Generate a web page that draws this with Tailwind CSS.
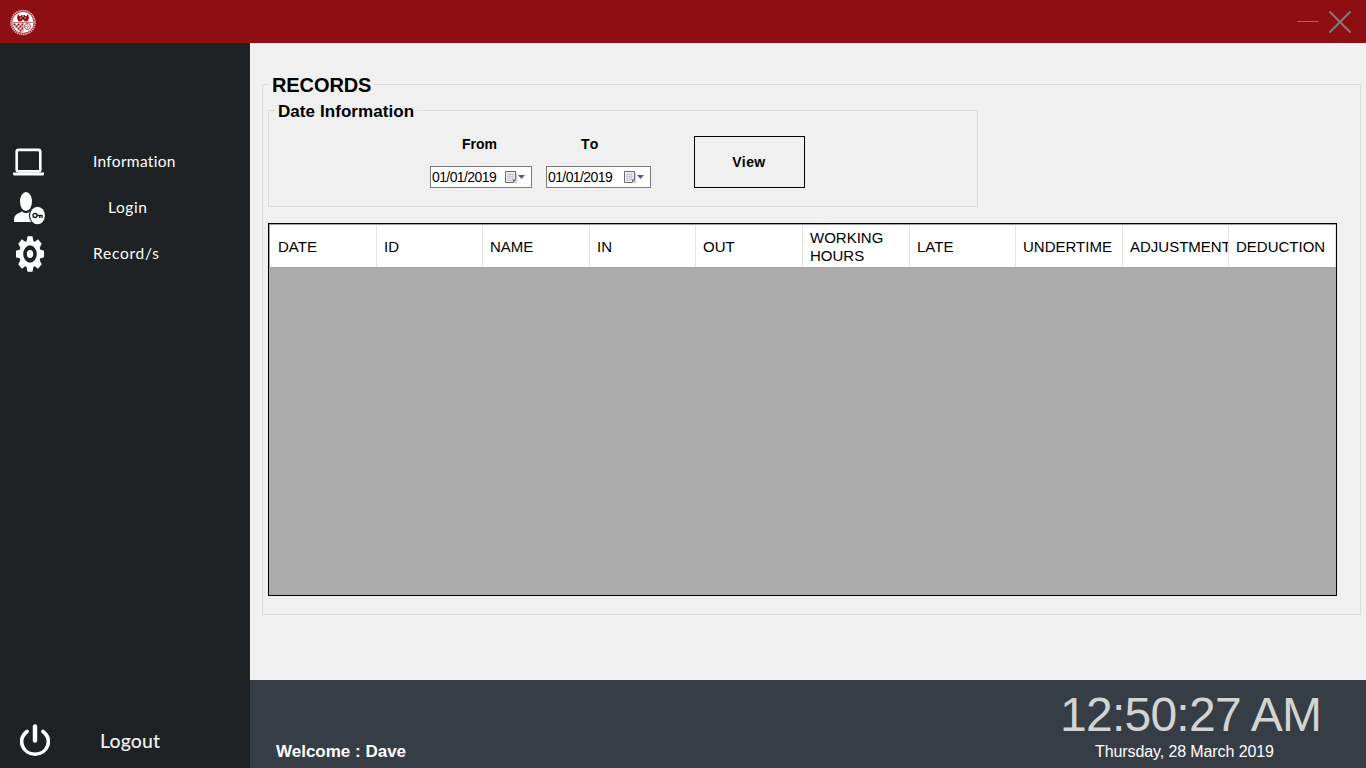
<!DOCTYPE html>
<html lang="en">
<head>
<meta charset="utf-8">
<title>Records</title>
<script src="https://cdn.jsdelivr.net/npm/@tailwindcss/browser@4"></script>
</head>
<body class="w-[1366px] h-[768px] overflow-hidden flex flex-col bg-[#f0f0f0] text-black font-['Liberation_Sans',Arial,sans-serif]">
<header class="h-[43px] shrink-0 bg-[#8e0e12] flex items-start justify-between pl-[9px] pr-[14px]">
  <svg class="mt-[8px]" width="28" height="28" viewBox="0 0 28 28">
    <circle cx="14" cy="14.500" r="11.800" fill="#8e0e12" stroke="#d9a5a7" stroke-width="2" stroke-dasharray="1.500 .6"/>
    <circle cx="14" cy="14.500" r="10.600" fill="#fff"/>
    <path d="M4 14.500h20M14 14.500v10" stroke="#b25a5d" stroke-width=".8"/>
    <path d="M9 6l2 2.500L12.500 7h3L17 8.500 19 6l1 4-1.500 3.500h-2.500l-2-2-2 2H9.500L8 10z" fill="#8e0e12"/>
    <path d="M11 10h1.500M15.500 10H17M13 8h2" stroke="#fff" stroke-width=".8"/>
    <path d="M4.500 15.500h2v2h-2zM8.500 15.500h2v2h-2zM6.500 17.500h2v2h-2zM10.500 17.500h2v2h-2zM8.500 19.500h2v2h-2zM12.500 15.500H14v2h-1.500zM12.500 19.500H14v2h-1.500zM10.500 21.500h2v2h-2z" fill="#8e0e12"/>
    <circle cx="18.500" cy="18.500" r="3" fill="none" stroke="#a64b4e" stroke-width="1"/>
    <path d="M15.500 18.500h6M18.500 15.500v6" stroke="#c07f81" stroke-width=".7"/>
  </svg>
  <svg class="mt-[8px]" width="56" height="28" viewBox="0 0 56 28">
    <path d="M1 13.500h21.500" stroke="#86747a" stroke-width="1"/>
    <path d="M33.500 3.500l21 21M54.500 3.500l-21 21" stroke="#84797b" stroke-width="2"/>
  </svg>
</header>
<div class="flex flex-1 min-h-0">
  <aside class="w-[250px] shrink-0 bg-[#1e2225] text-white flex flex-col justify-between pt-[96px] font-[Lato,sans-serif]">
    <nav class="flex flex-col">
      <a class="h-[46px] flex items-center">
        <svg class="ml-[13px] w-[32px] h-[30px] shrink-0" viewBox="0 0 32 30"><rect x="3.700" y="2.900" width="23.600" height="21.500" rx="2" fill="none" stroke="#fff" stroke-width="2.600"/><path d="M0 25.500h31v1.500q0 1.500-1.500 1.500h-28Q0 28.500 0 27z" fill="#fff"/></svg>
        <span class="ml-[48px] -mt-[2px] text-[15.5px] leading-[20px] tracking-[0.3px]">Information</span>
      </a>
      <a class="h-[46px] flex items-center">
        <svg class="ml-[13px] w-[33px] h-[34px] shrink-0" viewBox="0 0 33 34"><ellipse cx="13" cy="10.500" rx="6" ry="9.500" fill="#fff"/><path d="M1 31v-2q0-5 4-6.500l4-2q4 3.500 8 0l5 2.500v8z" fill="#fff"/><ellipse cx="24.500" cy="24.500" rx="8.600" ry="9.700" fill="#1e2225"/><ellipse cx="24.500" cy="24.500" rx="7.400" ry="8.700" fill="#fff"/><circle cx="22" cy="24.500" r="2" fill="none" stroke="#1e2225" stroke-width="1.400"/><path d="M24 24.500h5v2.500M26.800 24.500v2.500" fill="none" stroke="#1e2225" stroke-width="1.300"/></svg>
        <span class="ml-[62px] -mt-[2px] text-[15.5px] leading-[20px] tracking-[0.6px]">Login</span>
      </a>
      <a class="h-[46px] flex items-center">
        <svg class="ml-[15px] w-[30px] h-[36px] shrink-0" viewBox="0 0 30 36"><g transform="translate(15 18) scale(1 1.270)"><g fill="#fff"><circle r="10.700"/><path id="tooth" d="M-2.500-14h5l1.200 5h-7.400z"/><use href="#tooth" transform="rotate(45)"/><use href="#tooth" transform="rotate(90)"/><use href="#tooth" transform="rotate(135)"/><use href="#tooth" transform="rotate(180)"/><use href="#tooth" transform="rotate(225)"/><use href="#tooth" transform="rotate(270)"/><use href="#tooth" transform="rotate(315)"/></g><circle r="6.800" fill="#1e2225"/><circle r="3.200" fill="#fff"/></g></svg>
        <span class="ml-[48px] -mt-[2px] text-[15.5px] leading-[20px] tracking-[0.75px]">Record/s</span>
      </a>
    </nav>
    <a class="h-[54px] flex items-center">
      <svg class="ml-[20px] -mt-[2px] w-[30px] h-[34px] shrink-0" viewBox="0 0 30 34"><path d="M7 8.500C-3.500 17 3 31.200 15 31.200S33.500 17 23 8.500" fill="none" stroke="#fff" stroke-width="3.600" stroke-linecap="round"/><path d="M15 3.500v14" stroke="#fff" stroke-width="4.400" stroke-linecap="round"/></svg>
      <span class="ml-[50px] text-[19.5px] leading-[24px] text-[#f0f0f0] tracking-[0.1px] font-medium">Logout</span>
    </a>
  </aside>
  <div class="flex-1 min-w-0 flex flex-col">
    <main class="flex-1 pt-[41px] pl-[12px] pr-[5px]">
      <section class="relative h-[531px] border border-[#dcdcdc] pl-[5px] pt-[25px]">
        <h1 class="absolute left-[6px] top-[-12px] bg-[#f0f0f0] px-[3px] text-[20px] leading-[24px] font-bold tracking-[-0.1px] whitespace-nowrap">RECORDS</h1>
        <div class="relative w-[710px] h-[97px] border border-[#dcdcdc] pt-[25px] pl-[161px] flex items-start">
          <h2 class="absolute left-[6px] top-[-9px] bg-[#f0f0f0] px-[3px] text-[17px] leading-[20px] font-bold tracking-[0.07px] whitespace-nowrap">Date Information</h2>
          <div class="w-[102px] flex flex-col">
            <label class="h-[30px] pl-[32px] text-[14px] leading-[16px] font-bold">From</label>
            <div class="h-[22px] border border-[#7a7a7a] bg-white flex items-center pl-[1px]">
              <span class="w-[72px] text-[14px] leading-[16px] tracking-[-0.6px]">01/01/2019</span>
              <svg width="22" height="14" viewBox="0 0 22 14"><path d="M2 3h11v10H2z" fill="#d6ccc9"/><path d="M1.500 1.500h10v8l-2.500 3H1.500z" fill="#eef0f6" stroke="#72666a"/><path d="M3 4.500h7M3 6.500h7M3 8.500h7M3 10.500h5M4.500 3v8M6.500 3v8M8.500 3v8" stroke="#c3c6d4" stroke-width=".8"/><path d="M9 12.500v-3h3z" fill="#72666a"/><path d="M14 5h7l-3.500 4z" fill="#4a5f8c"/></svg>
            </div>
          </div>
          <div class="ml-[14px] w-[105px] flex flex-col">
            <label class="h-[30px] pl-[35px] text-[14px] leading-[16px] font-bold tracking-[1.2px]">To</label>
            <div class="h-[22px] border border-[#7a7a7a] bg-white flex items-center pl-[1px]">
              <span class="w-[75px] text-[14px] leading-[16px] tracking-[-0.6px]">01/01/2019</span>
              <svg width="22" height="14" viewBox="0 0 22 14"><path d="M2 3h11v10H2z" fill="#d6ccc9"/><path d="M1.500 1.500h10v8l-2.500 3H1.500z" fill="#eef0f6" stroke="#72666a"/><path d="M3 4.500h7M3 6.500h7M3 8.500h7M3 10.500h5M4.500 3v8M6.500 3v8M8.500 3v8" stroke="#c3c6d4" stroke-width=".8"/><path d="M9 12.500v-3h3z" fill="#72666a"/><path d="M14 5h7l-3.500 4z" fill="#4a5f8c"/></svg>
            </div>
          </div>
          <button class="ml-[43px] w-[111px] h-[52px] border border-black text-[14px] leading-[16px] font-bold tracking-[0.4px] pr-[1px]">View</button>
        </div>
        <div class="mt-[16px] w-[1069px] h-[373px] border border-black bg-[#ababab]">
          <div class="h-[44px] border-t border-b border-l border-[#a0a0a0] bg-white grid grid-cols-[107px_106px_107px_106px_107px_107px_106px_107px_106px_107px] items-stretch text-[15px] leading-[18px] *:flex *:items-center *:border-r *:border-[#e2e2e2] *:overflow-hidden *:mt-px">
            <div class="pl-[8px]">DATE</div>
            <div class="pl-[7px]">ID</div>
            <div class="pl-[7px]">NAME</div>
            <div class="pl-[7px]">IN</div>
            <div class="pl-[7px]">OUT</div>
            <div class="pl-[7px]">WORKING<br>HOURS</div>
            <div class="pl-[7px]">LATE</div>
            <div class="pl-[7px]">UNDERTIME</div>
            <div class="pl-[7px]">ADJUSTMENT</div>
            <div class="pl-[7px]">DEDUCTION</div>
          </div>
        </div>
      </section>
    </main>
    <footer class="h-[88px] shrink-0 bg-[#373d45] text-white flex justify-between">
      <p class="pt-[62px] pl-[26px] text-[17px] leading-[20px] font-bold">Welcome : Dave</p>
      <div class="w-[306px] pt-[8px]">
        <p class="text-[48px] leading-[53px] tracking-[-0.75px] text-[#d3d3d3] whitespace-nowrap">12:50:27 AM</p>
        <p class="pl-[35px] pt-px text-[16px] leading-[20px] tracking-[-0.1px] whitespace-nowrap">Thursday, 28 March 2019</p>
      </div>
    </footer>
  </div>
</div>
</body>
</html>
